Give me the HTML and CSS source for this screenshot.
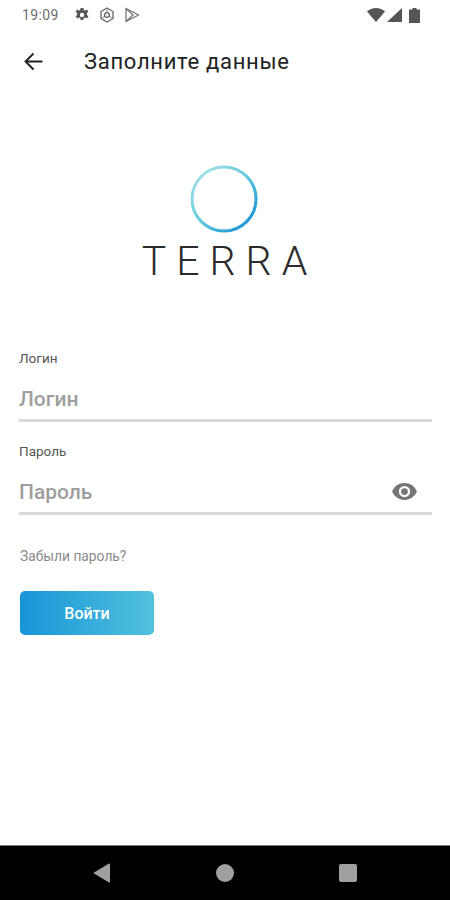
FILE: index.html
```html
<!DOCTYPE html>
<html lang="ru">
<head>
  <meta charset="UTF-8" />
  <meta name="viewport" content="width=device-width, initial-scale=1.0"/>
  <title>Заполните данные</title>
  <link rel="stylesheet" href="styles.css">
</head>
<body>

  <div class="status-bar">
    <span class="status-time">19:09</span>
    <div class="status-icons">
      <svg class="status-icon" viewBox="0 0 16 16"><path fill="#555" fill-rule="evenodd" d="M6.600 1h2.800l.4 2 1.300.6 1.800-1 1.500 2.100-1.500 1.400v1.800l1.500 1.400-1.500 2.100-1.800-1-1.300.6-.4 2H6.600l-.4-2-1.300-.6-1.800 1-1.500-2.100 1.500-1.400V6.100L1.600 4.700l1.500-2.100 1.800 1 1.300-.6zM8 5.800a2.200 2.200 0 1 0 0 4.400 2.200 2.200 0 0 0 0-4.400z"/></svg>
      <svg class="status-icon" viewBox="0 0 16 16"><g fill="none" stroke="#666"><path stroke-width="1.300" d="M8 1l6 3.500v7L8 15l-6-3.500v-7z"/><circle cx="8" cy="8" r="2.400" stroke-width="1.300"/><path stroke-width="0.900" d="M8 5.600V2.500M10 9.300l2.700 1.500M6 9.300l-2.700 1.500"/></g></svg>
      <svg class="status-icon" viewBox="0 0 16 16"><g fill="none" stroke="#777" stroke-width="1.300"><path d="M2 1.500v13L14.500 8z"/><path d="M2 1.500L9 8l-7 6.500"/></g></svg>
    </div>
    <div class="status-right">
      <svg class="wifi" viewBox="0 0 18 14"><path fill="#555" d="M0 3.500C2.400 1.300 5.600 0 9 0s6.600 1.300 9 3.500L9 14z"/></svg>
      <svg class="signal" viewBox="0 0 15 14"><path fill="#555" d="M15 0v14H0z"/></svg>
      <svg class="battery" viewBox="0 0 11 15"><path fill="#555" d="M3.500 0h4v1.400H11V15H0V1.400h3.500z"/></svg>
    </div>
  </div>

  <header class="toolbar">
    <svg class="back" viewBox="0 0 20 20"><path fill="none" stroke="#222" stroke-width="2" d="M19.500 10H2M10 1.600L1.600 10l8.400 8.400"/></svg>
    <h1 class="title">Заполните данные</h1>
  </header>

  <main class="content">
    <div class="logo">
      <svg class="logo-ring" viewBox="0 0 68 68">
        <defs>
          <linearGradient id="ring" x1="0.1" y1="0.1" x2="0.9" y2="0.9">
            <stop offset="0" stop-color="#a5e2e8"/>
            <stop offset="0.5" stop-color="#62c8e0"/>
            <stop offset="1" stop-color="#1a94d6"/>
          </linearGradient>
        </defs>
        <circle cx="34" cy="34" r="32" fill="none" stroke="url(#ring)" stroke-width="3"/>
      </svg>
      <div class="logo-text">TERRA</div>
    </div>

    <form class="form">
      <div class="field">
        <label class="field-label">Логин</label>
        <div class="field-input">
          <span class="placeholder">Логин</span>
        </div>
      </div>
      <div class="field">
        <label class="field-label">Пароль</label>
        <div class="field-input">
          <span class="placeholder">Пароль</span>
          <svg class="eye" viewBox="0 0 24 24"><path fill="#757575" d="M12 4.500C7 4.500 2.700 7.600 1 12c1.700 4.400 6 7.500 11 7.500s9.300-3.100 11-7.500c-1.700-4.400-6-7.500-11-7.500zM12 17a5 5 0 1 1 0-10 5 5 0 0 1 0 10zm0-8a3 3 0 1 0 0 6 3 3 0 0 0 0-6z"/></svg>
        </div>
      </div>
      <a class="forgot">Забыли пароль?</a>
      <button class="btn" type="button">Войти</button>
    </form>
  </main>

  <nav class="nav-bar">
    <svg class="nav-back" viewBox="0 0 18 20"><path fill="#a0a0a0" d="M17 1v18a1 1 0 0 1-1 .6L1 10.500a.6.6 0 0 1 0-1L16 .4a1 1 0 0 1 1 .6z"/></svg>
    <div class="nav-home"></div>
    <div class="nav-recent"></div>
  </nav>

</body>
</html>
```

FILE: styles.css
```css
* {
  box-sizing: border-box;
}

body {
  margin: 0;
  width: 450px;
  height: 900px;
  overflow: hidden;
  display: flex;
  flex-direction: column;
  background-color: #ffffff;
  font-family: Roboto, sans-serif;
  color: #222222;
}

.status-bar {
  height: 30px;
  padding: 0 30px 0 22px;
  display: flex;
  align-items: center;
  flex-shrink: 0;
}

.status-time {
  font-size: 14px;
  color: #6e6e6e;
  letter-spacing: 0.4px;
}

.status-icons {
  margin-left: 15px;
  display: flex;
  gap: 9px;
}

.status-icon {
  width: 16px;
  height: 16px;
}

.status-right {
  margin-left: auto;
  display: flex;
  align-items: center;
  gap: 2px;
}

.wifi {
  width: 18px;
  height: 14px;
}

.signal {
  width: 15px;
  height: 14px;
}

.battery {
  width: 11px;
  height: 15px;
  margin-left: 5px;
}

.toolbar {
  height: 62px;
  padding-left: 24px;
  display: flex;
  align-items: center;
  flex-shrink: 0;
}

.back {
  width: 19px;
  height: 19px;
}

.title {
  margin: 0 0 0 41px;
  font-size: 22px;
  font-weight: 400;
  letter-spacing: 0.7px;
  color: #222222;
}

.content {
  flex: 1;
  padding: 0 18px 0 19px;
}

.logo {
  margin-top: 73px;
  display: flex;
  flex-direction: column;
  align-items: center;
}

.logo-ring {
  width: 68px;
  height: 68px;
  margin-left: -3px;
}

.logo-text {
  margin-top: 4px;
  margin-left: 8px;
  font-size: 41px;
  line-height: 48px;
  font-weight: 300;
  letter-spacing: 10px;
  color: #2b2b2b;
}

.form {
  margin-top: 65px;
}

.field {
  margin-bottom: 21px;
}

.field-label {
  display: block;
  font-size: 13.5px;
  line-height: 16px;
  color: #555555;
}

.field-input {
  height: 48px;
  margin-top: 8px;
  padding-top: 4px;
  display: flex;
  align-items: center;
  justify-content: space-between;
  border-bottom: 3px solid #d9d9d9;
}

.placeholder {
  font-size: 21px;
  font-weight: 500;
  color: #9e9e9e;
}

.eye {
  width: 27px;
  height: 27px;
  margin-right: 14px;
}

.forgot {
  display: block;
  margin: 33px 0 0 1px;
  font-size: 13.8px;
  line-height: 16px;
  color: #8a8a8a;
}

.btn {
  display: block;
  width: 134px;
  height: 44px;
  margin: 27px 0 0 1px;
  border: none;
  border-radius: 5px;
  background: linear-gradient(90deg, #1795d8, #52c1dc);
  color: #ffffff;
  font-family: Roboto, sans-serif;
  font-size: 16px;
  font-weight: 500;
}

.nav-bar {
  height: 55px;
  flex-shrink: 0;
  display: flex;
  align-items: center;
  background-color: #000000;
  border-top: 1px solid #777777;
}

.nav-back {
  width: 18px;
  height: 20px;
  margin-left: 93px;
}

.nav-home {
  width: 18px;
  height: 18px;
  margin-left: 105px;
  border-radius: 50%;
  background-color: #a0a0a0;
}

.nav-recent {
  width: 18px;
  height: 18px;
  margin-left: 105px;
  border-radius: 2px;
  background-color: #a0a0a0;
}
```
